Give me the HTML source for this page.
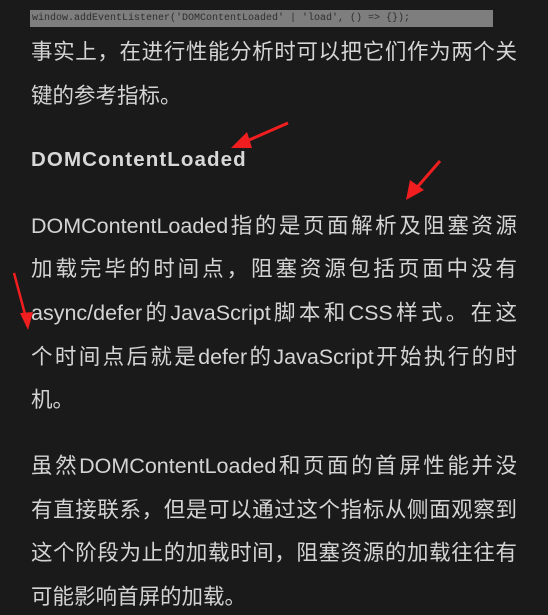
<!DOCTYPE html>
<html><head><meta charset="utf-8"><style>
html,body{margin:0;padding:0;background:#1a1a1a;width:548px;height:615px;overflow:hidden;position:relative}
.l{position:absolute;left:31px;width:486px;height:44px;line-height:44px;font-size:21.5px;color:#d4d4d4;font-family:"Liberation Sans","Noto Sans CJK SC",sans-serif;white-space:nowrap}
.j{text-align:justify;text-align-last:justify}
.code{position:absolute;left:30px;top:10px;width:463px;height:17px;background:#7e7e7e;font-family:"Liberation Mono",monospace;font-size:10px;line-height:17px;color:#2e2e2e;padding-left:2px;box-sizing:border-box;white-space:pre}
</style></head><body>
<div class="code">window.addEventListener('DOMContentLoaded' | 'load', () => {});</div>
<div class="l j" style="top:30px">事实上，在进行性能分析时可以把它们作为两个关</div>
<div class="l" style="top:74px">键的参考指标。</div>
<div class="l" style="top:138px;font-weight:bold;font-size:20.5px;letter-spacing:1.1px;color:#d8d8d8">DOMContentLoaded</div>
<div class="l j" style="top:204px">DOMContentLoaded指的是页面解析及阻塞资源</div>
<div class="l j" style="top:247px">加载完毕的时间点，阻塞资源包括页面中没有</div>
<div class="l j" style="top:291px">async/defer的JavaScript脚本和CSS样式。在这</div>
<div class="l j" style="top:335px">个时间点后就是defer的JavaScript开始执行的时</div>
<div class="l" style="top:378px">机。</div>
<div class="l j" style="top:444px">虽然DOMContentLoaded和页面的首屏性能并没</div>
<div class="l j" style="top:488px">有直接联系，但是可以通过这个指标从侧面观察到</div>
<div class="l j" style="top:531px">这个阶段为止的加载时间，阻塞资源的加载往往有</div>
<div class="l" style="top:575px">可能影响首屏的加载。</div>
<svg width="548" height="615" style="position:absolute;left:0;top:0">
<g fill="#f01e1e" stroke="#f01e1e">
<line x1="288" y1="123" x2="240" y2="144" stroke-width="3"/>
<polygon points="231,148 247,132 252,148" stroke="none"/>
<line x1="440" y1="161" x2="413" y2="192" stroke-width="3"/>
<polygon points="406,200 410,180 424,190" stroke="none"/>
<line x1="14" y1="273" x2="26" y2="318" stroke-width="2.5"/>
<polygon points="28,330 20,313 33,312" stroke="none"/>
</g></svg>
</body></html>
